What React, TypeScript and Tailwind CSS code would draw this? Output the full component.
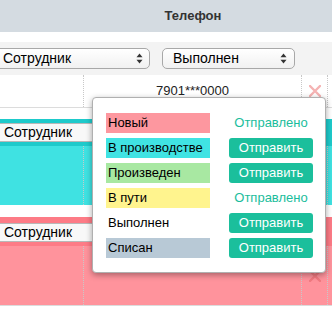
import React from "react";

const Arrows = () => (
  <svg width="7" height="11" viewBox="0 0 7 11" className="shrink-0">
    <path d="M3.5 0.5 L6.5 4.2 L0.5 4.2 Z" fill="#333" />
    <path d="M3.5 10.5 L6.5 6.8 L0.5 6.8 Z" fill="#333" />
  </svg>
);

const XIcon = ({ color }: { color: string }) => (
  <svg width="12" height="12" viewBox="0 0 12 12">
    <path d="M1 1 L11 11 M11 1 L1 11" stroke={color} strokeWidth="2.4" strokeLinecap="round" />
  </svg>
);

const Cells = ({ children, x }: { children?: React.ReactNode; x?: React.ReactNode }) => (
  <div className="flex h-full">
    <div className="w-[84px] h-full border-r border-dotted border-[#c8c8c8] shrink-0" />
    <div className="w-[218px] h-full border-r border-dotted border-[#c8c8c8] shrink-0 flex items-center justify-center">
      {children}
    </div>
    <div className="w-[26px] h-full border-r border-dotted border-[#c8c8c8] shrink-0 flex items-center justify-center">
      {x}
    </div>
    <div className="flex-1" />
  </div>
);

const rows: { label: string; bg: string; sent: boolean }[] = [
  { label: "Новый", bg: "bg-[#fd979f]", sent: true },
  { label: "В производстве", bg: "bg-[#40e3e3]", sent: false },
  { label: "Произведен", bg: "bg-[#a8e8a2]", sent: false },
  { label: "В пути", bg: "bg-[#fff48e]", sent: true },
  { label: "Выполнен", bg: "bg-white", sent: false },
  { label: "Списан", bg: "bg-[#b8c9d6]", sent: false },
];

export default function App() {
  return (
    <div className="relative w-[332px] h-[318px] overflow-hidden bg-white font-['Liberation_Sans',Arial,sans-serif] text-black">
      {/* header */}
      <div className="h-[32px] bg-[#d4dbe1] flex">
        <div className="w-[84px] shrink-0" />
        <div className="w-[218px] shrink-0 flex items-center justify-center text-[13px] font-bold text-[#333]">
          Телефон
        </div>
      </div>
      <div className="h-[10px]" />
      {/* filter row */}
      <div className="h-[33px] bg-[#f3f3f3] flex items-center">
        <div className="ml-[-12px] w-[162px] h-[21px] rounded-[5px] border border-[#a8a8a8] bg-gradient-to-b from-white to-[#f1f1f1] flex items-center pl-[14px] pr-[6px] text-[14px]">
          <span className="flex-1">Сотрудник</span>
          <Arrows />
        </div>
        <div className="ml-[12px] w-[133px] h-[21px] rounded-[5px] border border-[#a8a8a8] bg-gradient-to-b from-white to-[#f1f1f1] flex items-center pl-[10px] pr-[7px] text-[14px]">
          <span className="flex-1">Выполнен</span>
          <Arrows />
        </div>
      </div>
      {/* row 1 */}
      <div className="h-[32px]">
        <Cells x={<XIcon color="#f5b3b3" />}>
          <span className="text-[13px] text-[#222]">7901***0000</span>
        </Cells>
      </div>
      <div className="h-px bg-[#dcdcdc]" />
      <div className="h-[11px]" />
      {/* row 2 cyan */}
      <div className="h-[27px] bg-[#1ecacb] pt-[4px]">
        <div className="ml-[-1px] w-[260px] h-[19px] border border-[#b8b8b8] bg-[#f8f8f8] flex items-center pl-[4px] text-[14px]">
          Сотрудник
        </div>
      </div>
      <div className="h-[59px] bg-[#3fe2e2]">
        <Cells x={<XIcon color="#f07a7a" />} />
      </div>
      <div className="h-[12px]" />
      {/* row 3 pink */}
      <div className="h-[29px] bg-[#fd7b86] pt-[6px]">
        <div className="ml-[-1px] w-[260px] h-[19px] border border-[#b8b8b8] bg-[#f8f8f8] flex items-center pl-[4px] text-[14px]">
          Сотрудник
        </div>
      </div>
      <div className="h-[59px] bg-[#ff939c]">
        <Cells x={<XIcon color="#f27a80" />} />
      </div>
      <div className="h-px bg-[#dcdcdc]" />

      {/* popup */}
      <div className="absolute left-[92px] top-[97px] w-[234px] h-[176px] bg-white border border-[#b0b0b0] rounded-[4px] shadow-[0_2px_6px_rgba(0,0,0,0.35)] pt-[15px] pl-[13px]">
        <div className="flex flex-col gap-[5px]">
          {rows.map((r) => (
            <div key={r.label} className="flex items-center h-[20px]">
              <div className={`w-[104px] h-[20px] ${r.bg} flex items-center pl-[2px] text-[13px]`}>
                {r.label}
              </div>
              <div className="ml-[19px] w-[84px] h-[20px]">
                {r.sent ? (
                  <div className="h-full flex items-center justify-center text-[13px] text-[#1bbd9c]">
                    Отправлено
                  </div>
                ) : (
                  <div className="h-full rounded-[3px] bg-[#1bbf9c] flex items-center justify-center text-[13px] text-white">
                    Отправить
                  </div>
                )}
              </div>
            </div>
          ))}
        </div>
      </div>
    </div>
  );
}
